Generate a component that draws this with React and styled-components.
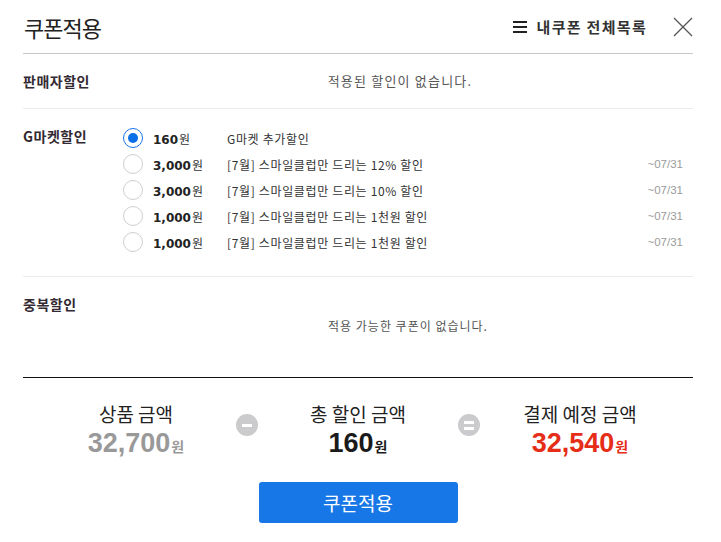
import React, { useState } from 'react';
import styled, { createGlobalStyle } from 'styled-components';

const GlobalStyle = createGlobalStyle`
  html, body {
    margin: 0;
    padding: 0;
    background: #fff;
  }
  body {
    font-family: "Noto Sans CJK KR", "Noto Sans", sans-serif;
    color: #333;
  }
`;

const StyledModal = styled.div`
  width: 721px;
  height: 542px;
  box-sizing: border-box;
  padding: 0 28px 0 23px;
  display: flex;
  flex-direction: column;
`;

const Header = styled.header`
  height: 53px;
  display: flex;
  align-items: center;
  border-bottom: 1px solid #c8c8c8;

  .title {
    margin: 0 0 0 1px;
    font-size: 22px;
    font-weight: 400;
    color: #222;
    line-height: 1;
    letter-spacing: -1px;
  }
`;

const ListLink = styled.a`
  margin-left: auto;
  display: flex;
  align-items: center;
  gap: 10px;
  font-size: 15px;
  font-weight: 700;
  color: #333;
  letter-spacing: 1.3px;
  text-decoration: none;
  cursor: pointer;
`;

const CloseButton = styled.button`
  margin-left: 26px;
  width: 20px;
  height: 20px;
  padding: 0;
  border: none;
  background: none;
  cursor: pointer;
  display: flex;
`;

const Section = styled.section`
  display: grid;
  grid-template-columns: 100px 1fr;
  border-bottom: 1px solid ${p => (p.$last ? '#111' : '#ececec')};
  min-height: ${p => p.$height || 'auto'};
  align-items: ${p => (p.$center ? 'center' : 'start')};
  padding: ${p => p.$pad || '0'};
  box-sizing: border-box;
`;

const SectionLabel = styled.h3`
  margin: 0;
  padding: ${p => p.$pad || '0'};
  font-size: 14px;
  font-weight: 700;
  color: #332a33;
  letter-spacing: 0.5px;
  line-height: 20px;
`;

const EmptyText = styled.p`
  margin: 0;
  padding: ${p => p.$pad || '0 16px 0 0'};
  text-align: center;
  font-size: ${p => p.$size || '12px'};
  letter-spacing: ${p => p.$spacing || '0'};
  color: #555;
  line-height: 18px;
`;

const CouponList = styled.ul`
  list-style: none;
  margin: 0;
  padding: 0 10px 0 0;
`;

const CouponRow = styled.li`
  height: 26px;
  display: flex;
  align-items: center;
  cursor: pointer;
`;

const Radio = styled.span`
  width: 20px;
  height: 20px;
  box-sizing: border-box;
  border-radius: 50%;
  border: 1px solid ${p => (p.$checked ? '#1a73e8' : '#cfcfcf')};
  display: flex;
  align-items: center;
  justify-content: center;
  flex-shrink: 0;

  &::after {
    content: '';
    width: 10px;
    height: 10px;
    border-radius: 50%;
    background: #0b6fe8;
    display: ${p => (p.$checked ? 'block' : 'none')};
  }
`;

const Amount = styled.span`
  width: 74px;
  margin-left: 10px;
  font-family: "DejaVu Sans", sans-serif;
  font-size: 12px;
  font-weight: 700;
  color: #222;

  small {
    font-family: "Noto Sans CJK KR", sans-serif;
    font-size: 12px;
    font-weight: 400;
    color: #333;
    margin-left: 1px;
  }
`;

const Desc = styled.span`
  font-size: 12px;
  letter-spacing: 0.65px;
  color: #333;
`;

const Until = styled.span`
  margin-left: auto;
  font-family: "Liberation Sans", sans-serif;
  font-size: 11.5px;
  color: #9a9a9a;
`;

const Summary = styled.div`
  display: flex;
  justify-content: center;
  align-items: flex-start;
  gap: 20px;
  padding-top: 22px;
`;

const SummaryItem = styled.div`
  width: 160px;
  display: flex;
  flex-direction: column;
  align-items: center;

  .label {
    font-size: 19px;
    line-height: 28px;
    color: #222;
  }
  .value {
    font-family: "Liberation Sans", sans-serif;
    font-size: 27px;
    font-weight: 700;
    line-height: 31px;
    color: ${p => p.$color};
  }
  .value small {
    font-family: "Noto Sans CJK KR", sans-serif;
    font-size: 14px;
    margin-left: 1px;
  }
`;

const Operator = styled.span`
  margin-top: 14px;
  width: 22px;
  height: 22px;
  border-radius: 50%;
  background: #cbcbcd;
  display: flex;
  flex-direction: column;
  align-items: center;
  justify-content: center;
  gap: 3px;
  flex-shrink: 0;

  i {
    display: block;
    width: 10px;
    height: 3px;
    background: #fff;
  }
`;

const ApplyButton = styled.button`
  align-self: center;
  margin-top: 20px;
  width: 199px;
  height: 41px;
  border: none;
  border-radius: 3px;
  background: #1877e6;
  color: #fff;
  font-family: "Noto Sans CJK KR", sans-serif;
  font-size: 19px;
  cursor: pointer;
`;

const coupons = [
  { id: 1, amount: '160', desc: 'G마켓 추가할인', until: '' },
  { id: 2, amount: '3,000', desc: '[7월] 스마일클럽만 드리는 12% 할인', until: '~07/31' },
  { id: 3, amount: '3,000', desc: '[7월] 스마일클럽만 드리는 10% 할인', until: '~07/31' },
  { id: 4, amount: '1,000', desc: '[7월] 스마일클럽만 드리는 1천원 할인', until: '~07/31' },
  { id: 5, amount: '1,000', desc: '[7월] 스마일클럽만 드리는 1천원 할인', until: '~07/31' },
];

const MenuIcon = () => (
  <svg width="14" height="12" viewBox="0 0 14 12">
    <rect x="0" y="0" width="14" height="2" fill="#222" />
    <rect x="0" y="5" width="14" height="2" fill="#222" />
    <rect x="0" y="10" width="14" height="2" fill="#222" />
  </svg>
);

const CloseIcon = () => (
  <svg width="20" height="20" viewBox="0 0 20 20">
    <path d="M1 1 L19 19 M19 1 L1 19" stroke="#555" strokeWidth="1.3" fill="none" />
  </svg>
);

const App = () => {
  const [selected, setSelected] = useState(1);

  return (
    <StyledModal>
      <GlobalStyle />
      <Header>
        <h2 className="title">쿠폰적용</h2>
        <ListLink>
          <MenuIcon />
          내쿠폰 전체목록
        </ListLink>
        <CloseButton aria-label="닫기">
          <CloseIcon />
        </CloseButton>
      </Header>

      <Section $height="55px" $center>
        <SectionLabel>판매자할인</SectionLabel>
        <EmptyText $size="13px" $spacing="1.2px">적용된 할인이 없습니다.</EmptyText>
      </Section>

      <Section $pad="16px 0 21px">
        <SectionLabel $pad="1px 0 0">G마켓할인</SectionLabel>
        <CouponList>
          {coupons.map(c => (
            <CouponRow key={c.id} onClick={() => setSelected(c.id)}>
              <Radio $checked={selected === c.id} />
              <Amount>
                {c.amount}
                <small>원</small>
              </Amount>
              <Desc>{c.desc}</Desc>
              {c.until && <Until>{c.until}</Until>}
            </CouponRow>
          ))}
        </CouponList>
      </Section>

      <Section $height="101px" $last>
        <SectionLabel $pad="17px 0 0">중복할인</SectionLabel>
        <EmptyText $pad="40px 0 0" $spacing="1px">적용 가능한 쿠폰이 없습니다.</EmptyText>
      </Section>

      <Summary>
        <SummaryItem $color="#999">
          <span className="label">상품 금액</span>
          <span className="value">
            32,700<small>원</small>
          </span>
        </SummaryItem>
        <Operator>
          <i />
        </Operator>
        <SummaryItem $color="#1a1a1a">
          <span className="label">총 할인 금액</span>
          <span className="value">
            160<small>원</small>
          </span>
        </SummaryItem>
        <Operator>
          <i />
          <i />
        </Operator>
        <SummaryItem $color="#e52d17">
          <span className="label">결제 예정 금액</span>
          <span className="value">
            32,540<small>원</small>
          </span>
        </SummaryItem>
      </Summary>

      <ApplyButton type="button">쿠폰적용</ApplyButton>
    </StyledModal>
  );
};

export default App;
